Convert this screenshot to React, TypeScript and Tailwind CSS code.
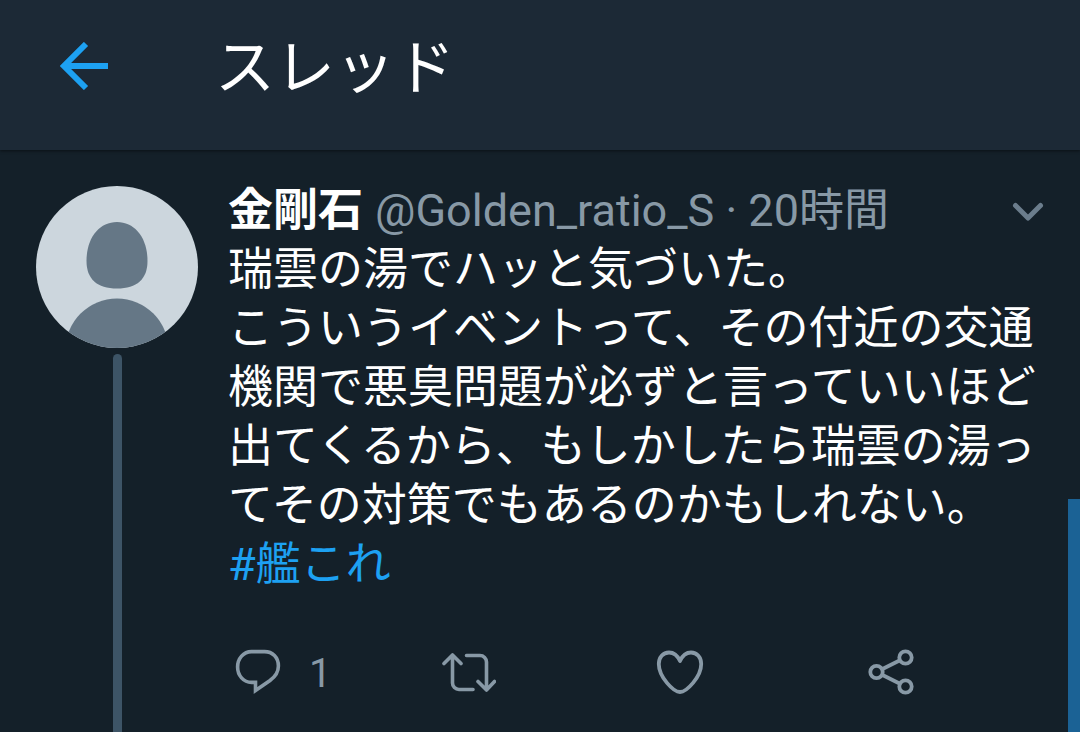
import React, { useState } from "react";

interface IconProps {
  className?: string;
}

const BackIcon: React.FC<IconProps> = ({ className = "" }) => (
  <svg viewBox="0 0 48 48" fill="none" stroke="currentColor" strokeWidth="6" className={className} aria-hidden="true">
    <path d="M48 24H5M26 2 4 24l22 22" />
  </svg>
);

const ChevronIcon: React.FC<IconProps> = ({ className = "" }) => (
  <svg
    viewBox="0 0 32 20"
    fill="none"
    stroke="currentColor"
    strokeWidth="5"
    strokeLinecap="round"
    strokeLinejoin="round"
    className={className}
    aria-hidden="true"
  >
    <path d="M3.5 4.500 16 17l12.500-12.500" />
  </svg>
);

const ReplyIcon: React.FC<IconProps> = ({ className = "" }) => (
  <svg
    viewBox="0 0 54 46"
    fill="none"
    stroke="currentColor"
    strokeWidth="3.6"
    strokeLinejoin="miter"
    className={className}
    aria-hidden="true"
  >
    <path d="M20.500 2.600H33.500C41.500 2.600 47.400 8.300 47.400 17C47.400 23.500 44.500 27.500 39 31.500L24.500 41.500V33.400H20.500C12.500 33.400 6.600 26.500 6.600 18C6.600 9.500 12.500 2.600 20.500 2.600Z" />
  </svg>
);

const RetweetIcon: React.FC<IconProps> = ({ className = "" }) => (
  <svg
    viewBox="0 0 54 46"
    fill="none"
    stroke="currentColor"
    strokeWidth="3.6"
    strokeLinecap="round"
    strokeLinejoin="round"
    className={className}
    aria-hidden="true"
  >
    <path d="M2 14.500 10.500 6l8.500 8.500M10.500 6.500V34a6.500 6.500 0 0 0 6.500 6.500H31" />
    <path d="M36 32.500 44.500 41l8-8.500M44.500 40.500V13A6.500 6.500 0 0 0 38 6.500H24.500" />
  </svg>
);

const HeartIcon: React.FC<IconProps> = ({ className = "" }) => (
  <svg
    viewBox="0 0 54 46"
    fill="none"
    stroke="currentColor"
    strokeWidth="3.8"
    strokeLinejoin="round"
    className={className}
    aria-hidden="true"
  >
    <path d="M27 12C24.500 6.500 20.500 3.500 16 3.500C10 3.500 5.800 8.500 5.800 15C5.800 28 20.500 43 27 43C33.500 43 48.200 28 48.200 15C48.200 8.500 44 3.500 38 3.500C33.500 3.500 29.500 6.500 27 12Z" />
  </svg>
);

const ShareIcon: React.FC<IconProps> = ({ className = "" }) => (
  <svg viewBox="0 0 54 46" fill="none" stroke="currentColor" strokeWidth="3.8" className={className} aria-hidden="true">
    <circle cx="12.500" cy="23" r="6.200" />
    <circle cx="41.500" cy="8.500" r="6.200" />
    <circle cx="41.500" cy="37.500" r="6.200" />
    <path d="M18 20.200 36 11.200M18 25.800 36 34.800" />
  </svg>
);

const Avatar: React.FC<IconProps> = ({ className = "" }) => (
  <svg viewBox="0 0 162 162" className={className} role="img" aria-label="金剛石">
    <defs>
      <clipPath id="avatar-clip">
        <circle cx="81" cy="81" r="81" />
      </clipPath>
    </defs>
    <g clipPath="url(#avatar-clip)">
      <rect width="162" height="162" fill="#ccd6dd" />
      <path
        d="M81 36C99 36 111.500 52 111.500 75C111.500 93 101 102.500 81 102.500C61 102.500 50.500 93 50.500 75C50.500 52 63 36 81 36Z"
        fill="#657786"
      />
      <circle cx="81" cy="164" r="51.500" fill="#657786" />
    </g>
  </svg>
);

interface ActionProps {
  label: string;
  count?: number;
  active?: boolean;
  onClick?: () => void;
  children: React.ReactNode;
}

const Action: React.FC<ActionProps> = ({ label, count, active = false, onClick, children }) => (
  <button
    type="button"
    aria-label={label}
    onClick={onClick}
    className={`flex items-start gap-6 cursor-pointer ${active ? "text-[#e0245e]" : "text-[#8899a6]"}`}
  >
    {children}
    {count !== undefined && <span className="text-[40px] leading-[50px]">{count}</span>}
  </button>
);

export default function App() {
  const [liked, setLiked] = useState(false);

  return (
    <div className="relative flex min-h-screen flex-col bg-[#142029] font-[Roboto,'Noto_Sans_CJK_JP',sans-serif] text-white">
      {/* Top bar */}
      <header className="flex h-[150px] items-start bg-[#1c2936] px-[60px] pt-6 shadow-[0_1px_3px_rgba(0,0,0,0.5)]">
        <button type="button" aria-label="戻る" className="mt-[18px] cursor-pointer text-[#1da1f2]">
          <BackIcon className="size-12" />
        </button>
        <h1 className="ml-[107px] text-[60px] leading-[90px]">スレッド</h1>
      </header>

      <main className="flex flex-1 flex-col">
        <article lang="ja" className="flex flex-1 pl-9">
          {/* Avatar and thread line */}
          <div className="flex w-[162px] shrink-0 flex-col items-center gap-1.5 pt-9">
            <Avatar className="size-[162px]" />
            <div className="w-[9px] flex-1 rounded-t-full bg-[#3d5466]" />
          </div>

          <div className="ml-[30px] min-w-0 flex-1 pt-[31px] pb-7">
            <div className="flex items-center justify-between pr-9 text-[45px] leading-[59px]">
              <div className="flex min-w-0 gap-3">
                <span className="font-bold">金剛石</span>
                <span className="truncate text-[#8899a6]">@Golden_ratio_S · 20時間</span>
              </div>
              <button type="button" aria-label="その他" className="cursor-pointer text-[#6b7d8c]">
                <ChevronIcon className="h-5 w-8" />
              </button>
            </div>

            <p className="pr-9 text-[45px] leading-[59px]">
              瑞雲の湯でハッと気づいた。
              <br />
              こういうイベントって、その付近の交通機関で悪臭問題が必ずと言っていいほど出てくるから、もしかしたら瑞雲の湯ってその対策でもあるのかもしれない。
              <br />
              <a href="#kancolle" className="text-[#1da1f2]">
                #艦これ
              </a>
            </p>

            <div className="mt-[55px] grid grid-cols-4 pr-[5px] pl-[3px]">
              <Action label="返信" count={1}>
                <ReplyIcon className="h-[46px] w-[54px]" />
              </Action>
              <Action label="リツイート">
                <RetweetIcon className="h-[46px] w-[54px]" />
              </Action>
              <Action label="いいね" active={liked} onClick={() => setLiked(!liked)}>
                <HeartIcon className="h-[46px] w-[54px]" />
              </Action>
              <Action label="共有">
                <ShareIcon className="h-[46px] w-[54px]" />
              </Action>
            </div>
          </div>
        </article>
      </main>

      {/* Scroll indicator over the right edge */}
      <div className="absolute top-[499px] right-0 bottom-0 w-3 bg-[#1b6295]" />
    </div>
  );
}
